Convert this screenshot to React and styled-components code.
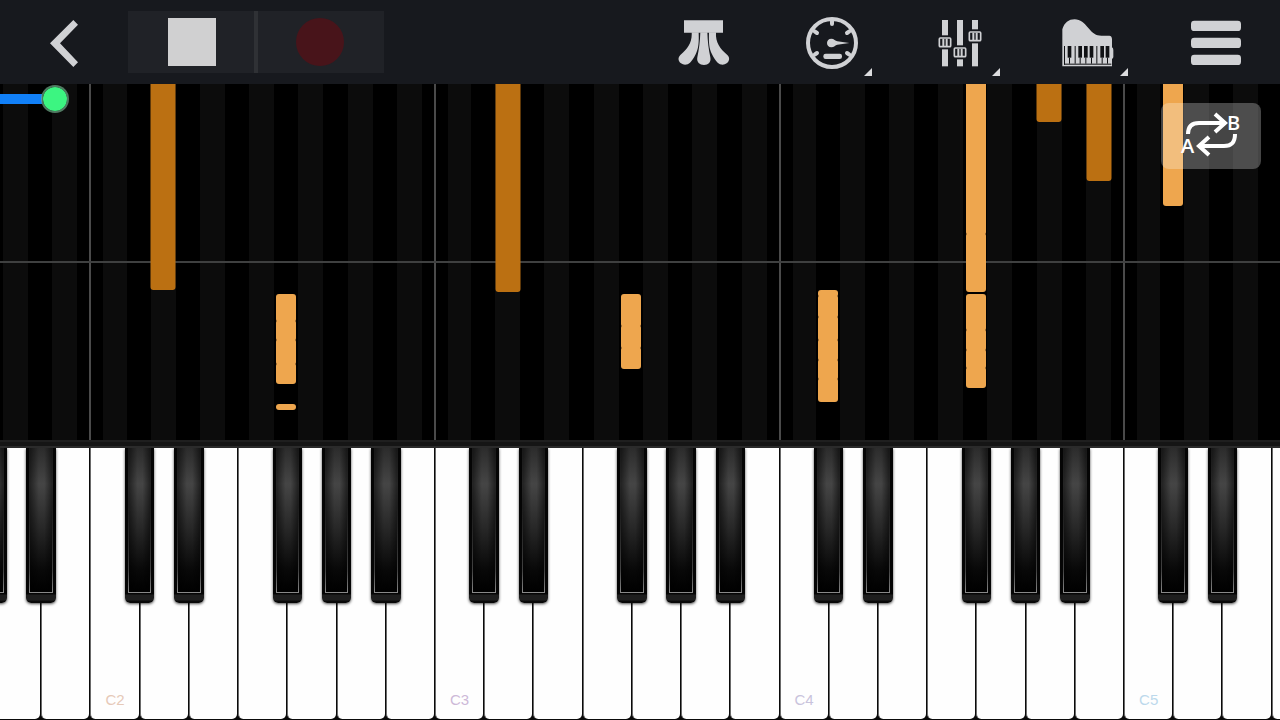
import React, {useState} from 'react'
import styled, {createGlobalStyle, css} from "styled-components";

const GlobalStyle = createGlobalStyle`
  * {
    box-sizing: border-box;
  }
  body {
    margin: 0;
    background-color: #000;
    font-family: "Liberation Sans", Arial, sans-serif;
  }
`;

const Page = styled.main`
  min-height: 100vh;
  display: flex;
  flex-direction: column;
  overflow: hidden;
`;

const Toolbar = styled.header`
  height: 84px;
  flex: none;
  display: grid;
  grid-template-columns: repeat(10, 1fr);
  align-items: center;
  background-color: #17191e;
`;

const ToolButton = styled.button`
  position: relative;
  grid-column: ${(props) => props.$column};
  height: 84px;
  padding: 2px 0 0;
  border: none;
  background: none;
  display: flex;
  align-items: center;
  justify-content: center;
  cursor: pointer;

  svg {
    display: block;
    fill: #d0d1d4;
  }
`;

const Corner = styled.span`
  position: absolute;
  right: 24px;
  bottom: 8px;
  width: 8px;
  height: 8px;
  background-color: #dcdcde;
  clip-path: polygon(100% 0, 100% 100%, 0 100%);
`;

const Transport = styled.div`
  grid-column: 2 / span 2;
  height: 62px;
  display: flex;
  align-items: stretch;
  background-color: #202227;
`;

const TransportButton = styled.button`
  flex: 1;
  padding: 0;
  border: none;
  background: none;
  display: flex;
  align-items: center;
  justify-content: center;
  cursor: pointer;
`;

const Divider = styled.span`
  width: 4px;
  margin: 0 -2px;
  background-color: #2f3135;
`;

const StopMark = styled.span`
  width: 48px;
  height: 48px;
  background-color: #d0d0d1;
`;

const RecordMark = styled.span`
  width: 48px;
  height: 48px;
  border-radius: 50%;
  background-color: #48141a;
`;

const Roll = styled.section`
  position: relative;
  flex: 356 1 0;
  display: flex;
  overflow: hidden;
`;

const Track = styled.div`
  position: relative;
  flex: none;
  width: 100%;
  margin-left: -9px;
  display: flex;
`;

const Lane = styled.div`
  flex: 0 0 calc(100% / 26);
  background: linear-gradient(90deg, #000 25%, #0c0c0c 25% 75%, #000 75%);
  ${(props) => props.$octave && css`
    border-left: 2px solid #4a4a4a;
  `}
`;

const BarLine = styled.div`
  position: absolute;
  top: 50%;
  left: 0;
  right: -9px;
  height: 2px;
  margin-top: -1px;
  background-color: #3f4040;
`;

const Note = styled.div`
  position: absolute;
  width: ${(props) => (props.$sharp ? 20 : 25)}px;
  transform: translateX(-50%);
  border-radius: ${(props) => (props.$cut ? '0 0 3px 3px' : '3px')};
  background-color: ${(props) => (props.$sharp ? '#eea64e' : '#bb7012')};
  ${(props) => props.$joined && css`
    box-sizing: content-box;
    padding-bottom: 2px;
  `}
`;

const Seek = styled.input`
  position: absolute;
  top: 1px;
  left: 0;
  width: 100%;
  height: 28px;
  margin: 0;
  appearance: none;
  background: none;
  pointer-events: none;

  &::-webkit-slider-runnable-track {
    height: 10px;
    background: linear-gradient(#1180f8, #1180f8) no-repeat;
    background-size: var(--played) 100%;
  }

  &::-webkit-slider-thumb {
    appearance: none;
    width: 28px;
    height: 28px;
    margin-top: -9px;
    border: 2px solid rgba(110, 170, 135, 0.7);
    border-radius: 50%;
    background-color: #3cf581;
    background-clip: padding-box;
    pointer-events: auto;
    cursor: pointer;
  }
`;

const LoopButton = styled.button`
  position: absolute;
  top: 19px;
  right: 19px;
  width: 100px;
  height: 66px;
  padding: 0;
  border: none;
  border-radius: 8px;
  background-color: rgba(255, 255, 255, 0.27);
  cursor: pointer;

  svg {
    display: block;
    fill: none;
    stroke: #fff;
    stroke-width: 4;
  }

  text {
    fill: #fff;
    stroke: none;
    font-family: "Open Sans", "Noto Sans", sans-serif;
    font-size: 20px;
    font-weight: 600;
  }
`;

const Rail = styled.div`
  flex: none;
  height: 8px;
  border-top: 2px solid #1f1f1f;
  border-bottom: 2px solid #2b2b2b;
  background-color: #151515;
`;

const Keyboard = styled.section`
  flex: 272 1 0;
  display: flex;
  overflow: hidden;
  background-color: #0a0a0a;
`;

const KeySlot = styled.div`
  position: relative;
  flex: 0 0 calc(100% / 26);
  display: flex;
`;

const WhiteKey = styled.button`
  flex: 1;
  margin: 0 0 1px 1px;
  padding: 0 0 11px;
  border: none;
  border-left: 1px solid #6a6a6a;
  border-radius: 0 0 5px 5px;
  background-color: #fefefe;
  color: ${(props) => props.$tint || '#000'};
  font-family: inherit;
  font-size: 15px;
  line-height: 16px;
  display: flex;
  align-items: flex-end;
  justify-content: center;
`;

const BlackKey = styled.button`
  position: absolute;
  z-index: 1;
  top: 0;
  left: calc(1px - 30%);
  width: 60%;
  height: 57%;
  padding: 0 3px 10px;
  border: none;
  border-radius: 0 0 5px 5px;
  background: linear-gradient(#050505 94%, #1e1e1e 95% 98%, #080808 99%);
  box-shadow: 0 1px 3px rgba(0, 0, 0, 0.7);
  display: flex;
`;

const BlackKeyTop = styled.span`
  flex: 1;
  border: 1px solid;
  border-top: none;
  border-image: linear-gradient(transparent 40%, #444 85%, #8a8a8a) 1;
  background:
    linear-gradient(90deg, rgba(0, 0, 0, 0.5), transparent 40% 65%, rgba(0, 0, 0, 0.5)),
    linear-gradient(#2c2c2c, #454545 25%, #282828 55%, #080808 85%, #000);
`;

const NAMES = ['C', 'D', 'E', 'F', 'G', 'A', 'B'];
const TINTS = {C2: '#e6c9b8', C3: '#cdb9d8', C4: '#c9c3dc', C5: '#bcd9ec'};

// the visible range opens on A1, a flat sits on the left edge of its white key
const KEYS = Array.from({length: 27}, (_, i) => {
  const letter = NAMES[(i + 5) % 7];
  return {
    name: letter + (1 + Math.floor((i + 5) / 7)),
    octave: letter === 'C',
    black: letter !== 'C' && letter !== 'F',
  };
});

const ROLL_TICKS = 356;

// at = place in white key widths, cuts = ticks where one hit ends and the next begins
const NOTES = [
  {at: 3.5, cuts: [0, 206]},
  {at: 10.5, cuts: [0, 208]},
  {at: 21.5, cuts: [0, 38]},
  {at: 22.5, cuts: [0, 97]},
  {at: 6, sharp: true, cuts: [210, 236, 255, 279, 300]},
  {at: 6, sharp: true, cuts: [320, 326]},
  {at: 13, sharp: true, cuts: [210, 241, 263, 285]},
  {at: 17, sharp: true, cuts: [206, 211, 232, 255, 275, 294, 318]},
  {at: 20, sharp: true, cuts: [0, 149, 208]},
  {at: 20, sharp: true, cuts: [210, 245, 265, 283, 304]},
  {at: 24, sharp: true, cuts: [0, 122]},
];

const percent = (part, whole) => `${(part / whole) * 100}%`;

const BackIcon = () => (
  <svg width="28" height="47" viewBox="150 58 84 141">
    <path d="M150 128L220 58L234 72L180 128L234 185L220 199Z" />
  </svg>
);

const PedalIcon = () => (
  <svg width="52" height="46" viewBox="55 60 156 138">
    <path d="M73 61H190V98H73Z" />
    <path d="M96 97H117C118 128 117 145 108 163C103 173 97 182 91 188C84 195 72 196 64 190C55 183 54 173 62 165C84 146 98 128 96 97Z" />
    <path d="M122 97H143C144 125 147 148 152 172C155 187 146 195 133 195C120 195 110 187 113 172C118 148 121 125 122 97Z" />
    <path d="M169 97H148C147 128 148 145 157 163C162 173 168 182 174 188C181 195 193 196 201 190C210 183 211 173 203 165C181 146 167 128 169 97Z" />
  </svg>
);

const TempoIcon = () => (
  <svg width="52" height="52" viewBox="438 49 156 156">
    <circle cx="516" cy="127" r="72" fill="none" stroke="#d0d1d4" strokeWidth="12" />
    <path
      d="M516 58V70M464 92L471 97M568 92L561 97M464 162L471 157M568 162L561 157"
      fill="none"
      stroke="#d0d1d4"
      strokeWidth="12"
      strokeLinecap="round"
    />
    <path d="M514 114C522 114 526 121 532 122L568 127L532 132C526 133 522 140 514 140C506 140 501 134 501 127C501 120 506 114 514 114Z" />
    <rect x="490" y="159" width="56" height="16" rx="7" />
  </svg>
);

const MixerIcon = () => (
  <svg width="44" height="48" viewBox="114 56 132 144">
    {[[135, 126], [180, 156], [225, 108]].map(([x, y]) => (
      <g key={x}>
        <rect x={x - 9} y="59" width="18" height="139" />
        <rect x={x - 22} y={y - 21} width="44" height="42" fill="#17191e" />
        <rect x={x - 17} y={y - 13} width="34" height="26" rx="3" fill="none" stroke="#d0d1d4" strokeWidth="5" />
        <path d={`M${x - 5} ${y - 11}V${y + 11}M${x + 5} ${y - 11}V${y + 11}`} stroke="#d0d1d4" strokeWidth="6" />
      </g>
    ))}
  </svg>
);

const PianoIcon = () => (
  <svg width="52" height="48" viewBox="488 57 156 144">
    <path d="M489 88C495 68 508 58 526 58C543 58 555 70 567 84C580 100 590 107 606 107H630Q638 108 638 118V142Q642 144 642 150V172L638 178V199H489Z" />
    <g fill="#101114">
      {[505, 537, 554, 571, 603, 619].map((x) => (
        <g key={x}>
          <rect x={x} y="138" width="11" height="35" />
          <rect x={x + 4} y="173" width="3" height="18" />
        </g>
      ))}
      <rect x="526" y="138" width="3" height="53" />
      <rect x="591" y="138" width="3" height="53" />
      <rect x="494" y="138" width="3" height="56" />
      <rect x="494" y="191" width="142" height="3" />
    </g>
  </svg>
);

const MenuIcon = () => (
  <svg width="50" height="46" viewBox="873 61 150 138">
    <rect x="873" y="63" width="150" height="31" rx="10" />
    <rect x="873" y="114" width="150" height="31" rx="10" />
    <rect x="873" y="165" width="150" height="31" rx="10" />
  </svg>
);

const LoopIcon = () => (
  <svg width="100" height="66" viewBox="0 0 100 66">
    <path d="M27 31C27 23 31 20 38 20H64M54 11L64 20L54 29" />
    <path d="M74 31C74 40 70 43 63 43H38M48 34L38 43L48 52" />
    <text x="20" y="50">A</text>
    <text x="66" y="27">B</text>
  </svg>
);

const App = () => {
  const [position, setPosition] = useState(3.3);

  return (
    <Page>
      <GlobalStyle />
      <Toolbar>
        <ToolButton $column={1} aria-label="Back"><BackIcon /></ToolButton>
        <Transport>
          <TransportButton aria-label="Stop"><StopMark /></TransportButton>
          <Divider />
          <TransportButton aria-label="Record"><RecordMark /></TransportButton>
        </Transport>
        <ToolButton $column={6} aria-label="Pedal"><PedalIcon /></ToolButton>
        <ToolButton $column={7} aria-label="Tempo"><TempoIcon /><Corner /></ToolButton>
        <ToolButton $column={8} aria-label="Mixer"><MixerIcon /><Corner /></ToolButton>
        <ToolButton $column={9} aria-label="Instrument"><PianoIcon /><Corner /></ToolButton>
        <ToolButton $column={10} aria-label="Menu"><MenuIcon /></ToolButton>
      </Toolbar>

      <Roll>
        <Track>
          {KEYS.map((key) => <Lane key={key.name} $octave={key.octave} />)}
          <BarLine />
          {NOTES.map((note) => note.cuts.slice(1).map((end, i) => {
            const start = note.cuts[i];
            return (
              <Note
                key={`${note.at}-${start}`}
                $sharp={note.sharp}
                $cut={start === 0}
                $joined={i < note.cuts.length - 2}
                style={{
                  left: percent(note.at, 26),
                  top: percent(start, ROLL_TICKS),
                  height: percent(end - start, ROLL_TICKS),
                }}
              />
            );
          }))}
        </Track>
        <Seek
          type="range"
          min="0"
          max="100"
          step="0.1"
          aria-label="Song position"
          value={position}
          onChange={(e) => setPosition(Number(e.target.value))}
          style={{'--played': `${position}%`}}
        />
        <LoopButton aria-label="Loop from A to B"><LoopIcon /></LoopButton>
      </Roll>

      <Rail />

      <Keyboard>
        <Track>
          {KEYS.map((key) => (
            <KeySlot key={key.name}>
              <WhiteKey $tint={TINTS[key.name]} aria-label={key.name}>
                {key.octave && key.name}
              </WhiteKey>
              {key.black && <BlackKey aria-label={`${key.name} flat`}><BlackKeyTop /></BlackKey>}
            </KeySlot>
          ))}
        </Track>
      </Keyboard>
    </Page>
  );
}

export default App;
